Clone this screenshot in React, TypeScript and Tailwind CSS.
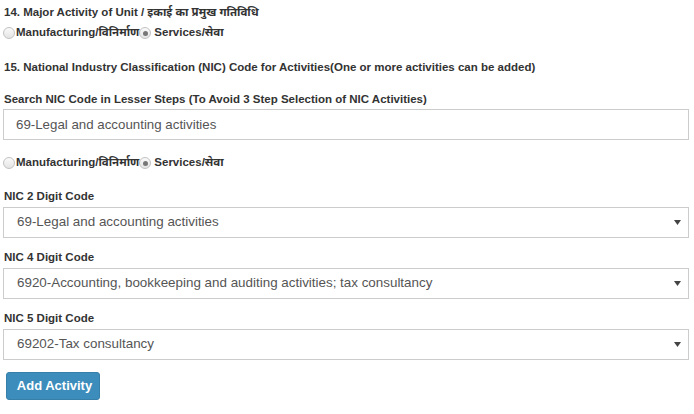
import React from "react";

const font = { fontFamily: '"Liberation Sans", Arial, "Noto Sans", "Noto Sans Devanagari", sans-serif' };

function Radio({ checked }: { checked?: boolean }) {
  return (
    <span className="inline-flex items-center justify-center w-[12px] h-[12px] rounded-full border border-[#c2c2c2] bg-gradient-to-b from-[#fafafa] to-[#e4e4e4] mr-[1px]">
      {checked && <span className="w-[5px] h-[5px] rounded-full bg-[#777]" />}
    </span>
  );
}

function RadioRow() {
  return (
    <div className="flex items-center text-[11.5px] font-bold text-[#333] h-[14px]">
      <Radio />
      <span>Manufacturing/विनिर्माण</span>
      <Radio checked />
      <span className="ml-[2px]">Services/सेवा</span>
    </div>
  );
}

function Label({ children }: { children: React.ReactNode }) {
  return <div className="text-[11.5px] font-bold text-[#333] leading-[14px]">{children}</div>;
}

function Select({ value }: { value: string }) {
  return (
    <div className="ml-[3px] mr-[5px] h-[31px] border border-[#ccc] bg-white flex items-center justify-between pl-[13px] pr-[7px]">
      <span className="text-[13.4px] text-[#555]">{value}</span>
      <svg width="7" height="5" viewBox="0 0 7 5"><path d="M0 0 H7 L3.5 5 Z" fill="#444" /></svg>
    </div>
  );
}

export default function App() {
  return (
    <div className="w-[694px] h-[414px] bg-white overflow-hidden" style={font}>
      <div className="pl-[4px] pt-[5px]"><Label>14. Major Activity of Unit / इकाई का प्रमुख गतिविधि</Label></div>
      <div className="pl-[3px] mt-[7px]"><RadioRow /></div>
      <div className="pl-[4px] mt-[20px]"><Label>15. National Industry Classification (NIC) Code for Activities(One or more activities can be added)</Label></div>
      <div className="pl-[4px] mt-[18px]"><Label>Search NIC Code in Lesser Steps (To Avoid 3 Step Selection of NIC Activities)</Label></div>
      <div className="mt-[3px] ml-[3px] mr-[5px] h-[31px] border border-[#ccc] flex items-center pl-[12px]">
        <span className="text-[13.3px] text-[#555]">69-Legal and accounting activities</span>
      </div>
      <div className="pl-[3px] mt-[16px]"><RadioRow /></div>
      <div className="pl-[4px] mt-[19px]"><Label>NIC 2 Digit Code</Label></div>
      <div className="mt-[4px]"><Select value="69-Legal and accounting activities" /></div>
      <div className="pl-[4px] mt-[12px]"><Label>NIC 4 Digit Code</Label></div>
      <div className="mt-[4px]"><Select value="6920-Accounting, bookkeeping and auditing activities; tax consultancy" /></div>
      <div className="pl-[4px] mt-[12px]"><Label>NIC 5 Digit Code</Label></div>
      <div className="mt-[4px]"><Select value="69202-Tax consultancy" /></div>
      <div className="pl-[6px] mt-[12px]">
        <button className="w-[94px] h-[28px] rounded-[3px] bg-[#3c8dbc] border border-[#367fa9] text-white text-[13px] font-bold pl-[3px]">Add Activity</button>
      </div>
    </div>
  );
}
